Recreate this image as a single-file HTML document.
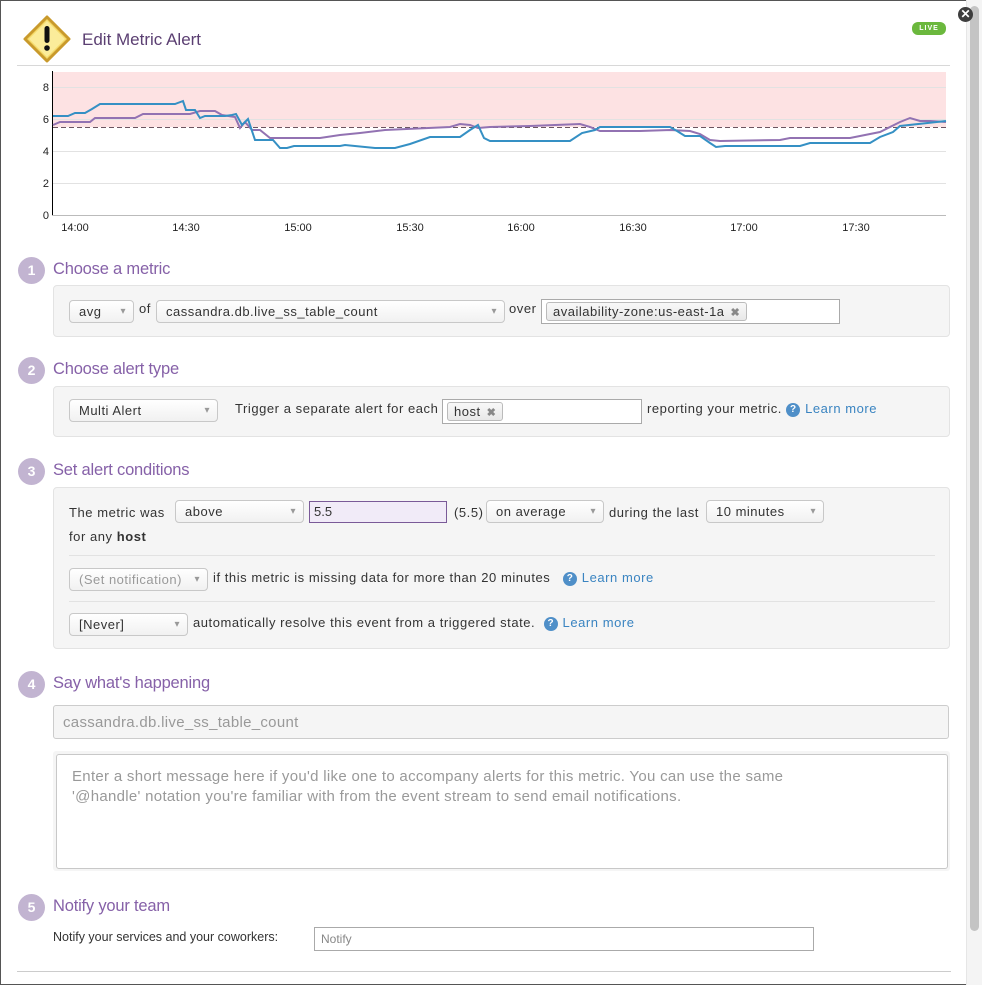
<!DOCTYPE html>
<html><head><meta charset="utf-8"><style>
*{box-sizing:border-box;margin:0;padding:0}
body{width:982px;height:985px;overflow:hidden;background:#fff;font-family:"Liberation Sans",sans-serif;font-size:13px;color:#333;position:relative}
.a{position:absolute}
.frame{left:0;top:0;width:982px;height:985px;border:1px solid #555;border-right:none}
.title{left:82px;top:30px;font-size:17px;color:#5b3f72}
.hr{height:1px;background:#d8d8d8}
.num{width:27px;height:27px;border-radius:50%;background:#c2b4d1;color:#fff;font-weight:bold;font-size:14px;text-align:center;line-height:27px}
.h{font-size:16.5px;color:#8661a8;letter-spacing:-0.2px}
.box{background:#f5f5f5;border:1px solid #e3e3e3;border-radius:4px}
.sel{background:linear-gradient(#fff,#f1f1f1);border:1px solid #c8c8c8;border-radius:4px;height:23px;line-height:21px;padding-left:9px;font-size:13px;color:#333;letter-spacing:0.5px}
.sel:after{content:"▾";position:absolute;right:7px;top:0;font-size:10px;color:#999}
.inp{background:#fff;border:1px solid #aaa}
.tag{background:linear-gradient(#f8f8f8,#e8e8e8);border:1px solid #bbb;border-radius:3px;height:19px;line-height:17px;padding:0 6px;font-size:13px;letter-spacing:0.5px}
.tag b{color:#888;font-size:11px;margin-left:6px}
.t{font-size:13px;white-space:nowrap;letter-spacing:0.55px}
.q{display:inline-block;width:14px;height:14px;border-radius:50%;background:#4f8fc8;color:#fff;font-size:10px;font-weight:bold;text-align:center;line-height:14px;vertical-align:1px;margin-right:5px;letter-spacing:0}
.lm{color:#3a84c1}
</style></head><body>
<div class="a frame"></div>
<div class="a" style="left:966px;top:0;width:16px;height:985px;background:#f4f4f4;border-left:1px solid #e6e6e6"></div>
<div class="a" style="left:970px;top:6px;width:9px;height:925px;background:#c4c4c4;border-radius:5px"></div>
<div class="a" style="left:958px;top:7px;width:15px;height:15px;border-radius:50%;background:#3d3d3d;color:#fff;font-size:12px;font-weight:bold;text-align:center;line-height:15px">✕</div>
<div class="a" style="left:912px;top:22px;width:34px;height:13px;border-radius:6px;background:#6bb83d;color:#fff;font-size:7px;font-weight:bold;text-align:center;line-height:13px;letter-spacing:1px">LIVE</div>

<svg class="a" style="left:22px;top:14px" width="50" height="50" viewBox="0 0 50 50">
<path d="M25 3 L47 25 L25 47 L3 25 Z" fill="#f4da6a" stroke="#c99a2c" stroke-width="3" stroke-linejoin="round"/>
<path d="M25 7 L43 25 L25 43 L7 25 Z" fill="#fbec9a"/>
<rect x="22.5" y="12" width="5" height="17" rx="2.5" fill="#111"/>
<circle cx="25" cy="34" r="2.8" fill="#111"/>
</svg>
<div class="a title">Edit Metric Alert</div>
<div class="a hr" style="left:17px;top:65px;width:933px"></div>

<svg class="a" style="left:30px;top:70px" width="920" height="170" viewBox="30 70 920 170">
<rect x="53" y="72" width="893" height="55" fill="#fde2e3"/>
<g stroke="#e2e2e2" stroke-width="1">
<line x1="53" y1="87.5" x2="946" y2="87.5"/><line x1="53" y1="119.5" x2="946" y2="119.5"/><line x1="53" y1="151.5" x2="946" y2="151.5"/><line x1="53" y1="183.5" x2="946" y2="183.5"/></g>
<line x1="53" y1="127.5" x2="946" y2="127.5" stroke="#6b5560" stroke-dasharray="5,3"/>
<line x1="52.5" y1="71" x2="52.5" y2="216" stroke="#000"/>
<line x1="52" y1="215.5" x2="946" y2="215.5" stroke="#bbb"/>
<polyline fill="none" stroke="#9272b2" stroke-width="2" points="53,125 60,122 90,122 95,118 135,118 143,114 190,114 200,111 215,111 222,115 235,117 240,128 245,122 252,130 260,130 270,138 320,138 340,135 360,133 385,130 450,127 460,124 470,125 478,128 490,127 530,126 580,124 590,127 600,131 640,131 670,130 690,131 700,134 710,140 720,141 780,140 790,138 850,138 880,132 900,122 910,118 920,121 930,121 946,122"/>
<polyline fill="none" stroke="#3590c4" stroke-width="2" points="53,116 68,116 75,113 85,113 92,109 100,104 175,104 183,101 186,110 195,110 200,118 205,116 225,116 232,115 236,114 242,125 248,119 255,140 273,140 280,148 287,148 294,146 340,146 345,145 375,148 395,148 410,144 430,137 460,137 470,130 478,125 484,138 490,141 570,141 582,133 595,130 600,127 670,127 677,131 685,136 700,136 710,143 716,147 725,146 800,146 810,143 870,143 880,137 893,132 900,126 946,121"/>
<g font-family="Liberation Sans" font-size="11" fill="#222" text-anchor="end">
<text x="49" y="91">8</text><text x="49" y="123">6</text><text x="49" y="155">4</text><text x="49" y="187">2</text><text x="49" y="219">0</text></g>
<g font-family="Liberation Sans" font-size="11" fill="#222" text-anchor="middle">
<text x="75" y="231">14:00</text><text x="186" y="231">14:30</text><text x="298" y="231">15:00</text><text x="410" y="231">15:30</text><text x="521" y="231">16:00</text><text x="633" y="231">16:30</text><text x="744" y="231">17:00</text><text x="856" y="231">17:30</text></g>
</svg>

<div class="a num" style="left:18px;top:257px">1</div>
<div class="a h" style="left:53px;top:260px">Choose a metric</div>
<div class="a box" style="left:53px;top:285px;width:897px;height:52px"></div>
<div class="a sel" style="left:69px;top:300px;width:65px">avg</div>
<div class="a t" style="left:139px;top:301px">of</div>
<div class="a sel" style="left:156px;top:300px;width:349px">cassandra.db.live_ss_table_count</div>
<div class="a t" style="left:509px;top:301px">over</div>
<div class="a inp" style="left:541px;top:299px;width:299px;height:25px"></div>
<div class="a tag" style="left:546px;top:302px">availability-zone:us-east-1a<b>✖</b></div>

<div class="a num" style="left:18px;top:357px">2</div>
<div class="a h" style="left:53px;top:360px">Choose alert type</div>
<div class="a box" style="left:53px;top:386px;width:897px;height:51px"></div>
<div class="a sel" style="left:69px;top:399px;width:149px">Multi Alert</div>
<div class="a t" style="left:235px;top:401px">Trigger a separate alert for each</div>
<div class="a inp" style="left:442px;top:399px;width:200px;height:25px"></div>
<div class="a tag" style="left:447px;top:402px">host<b>✖</b></div>
<div class="a t" style="left:647px;top:401px">reporting your metric. <span class="q">?</span><span class="lm">Learn more</span></div>

<div class="a num" style="left:18px;top:458px">3</div>
<div class="a h" style="left:53px;top:461px">Set alert conditions</div>
<div class="a box" style="left:53px;top:487px;width:897px;height:162px"></div>
<div class="a t" style="left:69px;top:505px">The metric was</div>
<div class="a sel" style="left:175px;top:500px;width:129px">above</div>
<div class="a" style="left:309px;top:501px;width:138px;height:22px;background:#f1ebf8;border:1px solid #7a5a98;padding:2px 0 0 4px">5.5</div>
<div class="a t" style="left:454px;top:505px">(5.5)</div>
<div class="a sel" style="left:486px;top:500px;width:118px">on average</div>
<div class="a t" style="left:609px;top:505px">during the last</div>
<div class="a sel" style="left:706px;top:500px;width:118px">10 minutes</div>
<div class="a t" style="left:69px;top:529px">for any <b>host</b></div>
<div class="a hr" style="left:69px;top:555px;width:866px;background:#e2e2e2"></div>
<div class="a sel" style="left:69px;top:568px;width:139px;color:#999">(Set notification)</div>
<div class="a t" style="left:213px;top:570px">if this metric is missing data for more than 20 minutes&nbsp;&nbsp; <span class="q">?</span><span class="lm">Learn more</span></div>
<div class="a hr" style="left:69px;top:601px;width:866px;background:#e2e2e2"></div>
<div class="a sel" style="left:69px;top:613px;width:119px">[Never]</div>
<div class="a t" style="left:193px;top:615px">automatically resolve this event from a triggered state.&nbsp; <span class="q">?</span><span class="lm">Learn more</span></div>

<div class="a num" style="left:18px;top:671px">4</div>
<div class="a h" style="left:53px;top:674px">Say what's happening</div>
<div class="a" style="left:53px;top:705px;width:896px;height:34px;background:#f5f5f5;border:1px solid #ccc;border-radius:3px;padding:8px 0 0 9px;font-size:15px;color:#999;letter-spacing:0.3px">cassandra.db.live_ss_table_count</div>
<div class="a" style="left:53px;top:751px;width:897px;height:120px;background:#f5f5f5;border-radius:3px"></div>
<div class="a" style="left:56px;top:754px;width:892px;height:115px;background:#fff;border:1px solid #c8c8c8;border-radius:3px;padding:12px 15px;font-size:15px;line-height:20px;color:#999;letter-spacing:0.3px;white-space:nowrap">Enter a short message here if you'd like one to accompany alerts for this metric. You can use the same<br>'@handle' notation you're familiar with from the event stream to send email notifications.</div>

<div class="a num" style="left:18px;top:894px">5</div>
<div class="a h" style="left:53px;top:897px">Notify your team</div>
<div class="a t" style="left:53px;top:930px;font-size:12.5px;letter-spacing:0">Notify your services and your coworkers:</div>
<div class="a inp" style="left:314px;top:927px;width:500px;height:24px;padding:4px 6px;font-size:12px;color:#888">Notify</div>
<div class="a hr" style="left:17px;top:971px;width:934px;background:#ccc"></div>
</body></html>
